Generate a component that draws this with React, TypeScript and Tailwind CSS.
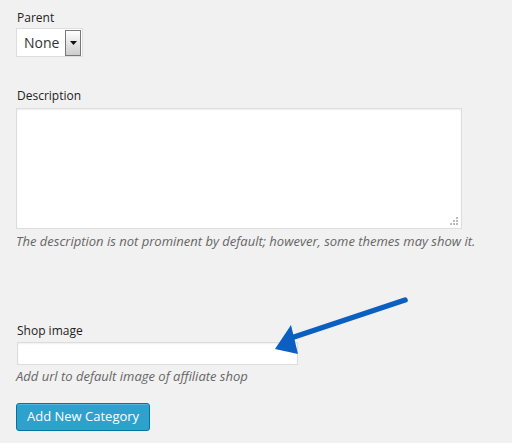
import React from "react";

export default function App() {
  return (
    <div
      className="w-[512px] h-[443px] bg-[#f1f1f1] text-[#222] pl-[16px] pt-[9px] overflow-hidden relative"
      style={{ fontFamily: '"Open Sans", "Noto Sans", sans-serif' }}
    >
      <div className="text-[12px] leading-[18px] pl-[1px]">Parent</div>
      <div className="mt-[1px] flex">
        <div className="h-[29px] w-[67px] bg-white border border-[#ddd] flex items-center pl-[7px] pr-[1px] justify-between">
          <span className="text-[14px] text-[#333]">None</span>
          <div className="h-[26px] w-[16px] border border-[#777] bg-gradient-to-b from-white to-[#ccc] flex items-center justify-center">
            <svg width="7" height="4" viewBox="0 0 7 4"><path d="M0 0h7L3.5 4z" fill="#111" /></svg>
          </div>
        </div>
      </div>
      <div className="mt-[30px] text-[12px] leading-[18px] pl-[1px]">Description</div>
      <div className="mt-[3px] w-[446px] h-[121px] bg-white border border-[#ddd] shadow-[inset_0_1px_2px_rgba(0,0,0,0.07)] relative">
        <svg className="absolute right-[2px] bottom-[2px]" width="9" height="9" viewBox="0 0 9 9">
          <rect x="6" y="0" width="2" height="2" fill="#bbb" />
          <rect x="3" y="3" width="2" height="2" fill="#bbb" />
          <rect x="6" y="3" width="2" height="2" fill="#bbb" />
          <rect x="0" y="6" width="2" height="2" fill="#bbb" />
          <rect x="3" y="6" width="2" height="2" fill="#bbb" />
          <rect x="6" y="6" width="2" height="2" fill="#bbb" />
        </svg>
      </div>
      <div className="mt-[3px] text-[13px] leading-[18px] italic text-[#666]">
        The description is not prominent by default; however, some themes may show it.
      </div>
      <div className="mt-[72px] text-[12px] leading-[18px] pl-[1px]">Shop image</div>
      <div className="mt-[2px] ml-[1px] w-[281px] h-[23px] bg-white border border-[#ddd] shadow-[inset_0_1px_2px_rgba(0,0,0,0.07)]"></div>
      <div className="mt-[2px] text-[13px] leading-[18px] italic text-[#666]">
        Add url to default image of affiliate shop
      </div>
      <button className="mt-[18px] h-[28px] px-[10px] bg-[#2ea2cc] border border-[#0074a2] rounded-[3px] text-white text-[13px] shadow-[inset_0_1px_0_rgba(120,200,230,0.5)]">
        Add New Category
      </button>
      <svg className="absolute left-0 top-0" width="512" height="443" viewBox="0 0 512 443">
        <path d="M405 300 L288 339" stroke="#0a5fc0" strokeWidth="5.5" strokeLinecap="round" fill="none" />
        <path d="M275 349 L291 325 L298 354 Z" fill="#0a5fc0" />
      </svg>
    </div>
  );
}
